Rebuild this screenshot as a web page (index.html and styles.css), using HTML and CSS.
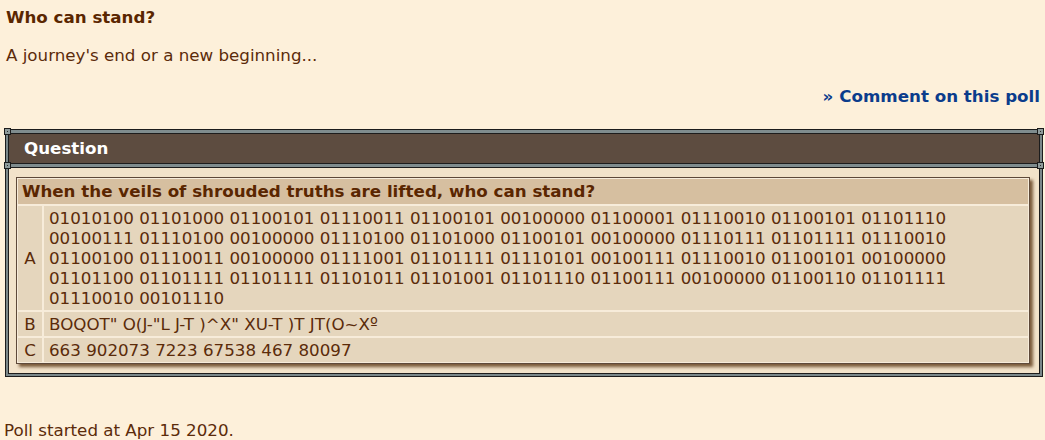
FILE: index.html
```html
<!DOCTYPE html>
<html>
<head>
<meta charset="utf-8">
<link rel="stylesheet" href="styles.css">
</head>
<body>
<div class="page">
  <h1 class="title">Who can stand?</h1>
  <p class="desc">A journey's end or a new beginning...</p>
  <div class="comment"><a href="#">» Comment on this poll</a></div>
  <div class="frame">
    <div class="rail"><span class="rivet rivet-l"></span><span class="rivet rivet-r"></span></div>
    <div class="frame-head">Question</div>
    <div class="rail"><span class="rivet rivet-l"></span><span class="rivet rivet-r"></span></div>
    <div class="frame-body">
      <div class="poll">
        <div class="poll-q">When the veils of shrouded truths are lifted, who can stand?</div>
        <div class="poll-letter">A</div>
        <div class="poll-answer">01010100 01101000 01100101 01110011 01100101 00100000 01100001 01110010 01100101 01101110 00100111 01110100 00100000 01110100 01101000 01100101 00100000 01110111 01101111 01110010 01100100 01110011 00100000 01111001 01101111 01110101 00100111 01110010 01100101 00100000 01101100 01101111 01101111 01101011 01101001 01101110 01100111 00100000 01100110 01101111 01110010 00101110</div>
        <div class="poll-letter">B</div>
        <div class="poll-answer">BOQOT" O(J-"L J-T )^X" XU-T )T JT(O~Xº</div>
        <div class="poll-letter">C</div>
        <div class="poll-answer">663 902073 7223 67538 467 80097</div>
      </div>
    </div>
  </div>
  <p class="started">Poll started at Apr 15 2020.</p>
</div>
</body>
</html>
```

FILE: styles.css
```css
html, body {
  margin: 0;
  padding: 0;
}
body {
  background: #fdf0da;
  font-family: "DejaVu Sans", Verdana, sans-serif;
  font-size: 16.7px;
  color: #5b2b0a;
}
.page {
  padding: 5px 2px 0 5px;
}
.title {
  margin: 0 0 0 1px;
  font-size: 16.7px;
  line-height: 24px;
  font-weight: bold;
  color: #5a2600;
}
.desc {
  margin: 14px 0 0 1px;
  line-height: 24px;
}
.comment {
  margin-top: 17px;
  text-align: right;
  line-height: 24px;
  padding-right: 3px;
}
.comment a {
  color: #0b3c8c;
  font-weight: bold;
  text-decoration: none;
}
.frame {
  margin-top: 21px;
  width: 1032px;
  background: #7a8789;
  border-left: 1px solid #1c1c1c;
  border-right: 1px solid #1c1c1c;
  border-bottom: 1px solid #1c1c1c;
  padding: 0 2px 2px;
}
.rail {
  height: 3px;
  background: #7f8c8e;
  border-top: 1px solid #1c1c1c;
  border-bottom: 1px solid #1c1c1c;
  position: relative;
  margin: 0 -3px;
}
.rivet {
  position: absolute;
  top: -2px;
  width: 5px;
  height: 5px;
  background: #8f9b9b;
  border: 1px solid #1c1c1c;
}
.rivet::after {
  content: "";
  position: absolute;
  left: 2px;
  top: 2px;
  width: 1px;
  height: 1px;
  background: #2a2a2a;
}
.rivet-l { left: -1px; }
.rivet-r { right: -1px; }
.frame-head {
  background: #5d4c40;
  color: #ffffff;
  font-weight: bold;
  line-height: 29px;
  padding-left: 15px;
  border-left: 1px solid #1c1c1c;
  border-right: 1px solid #1c1c1c;
}
.frame-body {
  background: #f2e3ca;
  border-left: 1px solid #1c1c1c;
  border-right: 1px solid #1c1c1c;
  border-bottom: 1px solid #1c1c1c;
  padding: 9px 9px 9px 7px;
}
.poll {
  display: grid;
  grid-template-columns: 24px 1fr;
  gap: 2px;
  padding: 1px;
  background: #f7ecda;
  border: 1px solid #5e4a3a;
  box-shadow: 3px 3px 3px #7a5a3a;
}
.poll-q {
  grid-column: 1 / 3;
  background: #d6bfa0;
  font-weight: bold;
  line-height: 25px;
  padding-left: 4px;
  color: #5a2600;
}
.poll-letter {
  background: #e5d6bd;
  display: flex;
  align-items: center;
  justify-content: center;
  line-height: 20px;
}
.poll-answer {
  background: #e5d6bd;
  line-height: 20px;
  padding: 2px 6px 2px 5px;
}
.started {
  margin: 41px 0 0 -1px;
  line-height: 24px;
}
```
